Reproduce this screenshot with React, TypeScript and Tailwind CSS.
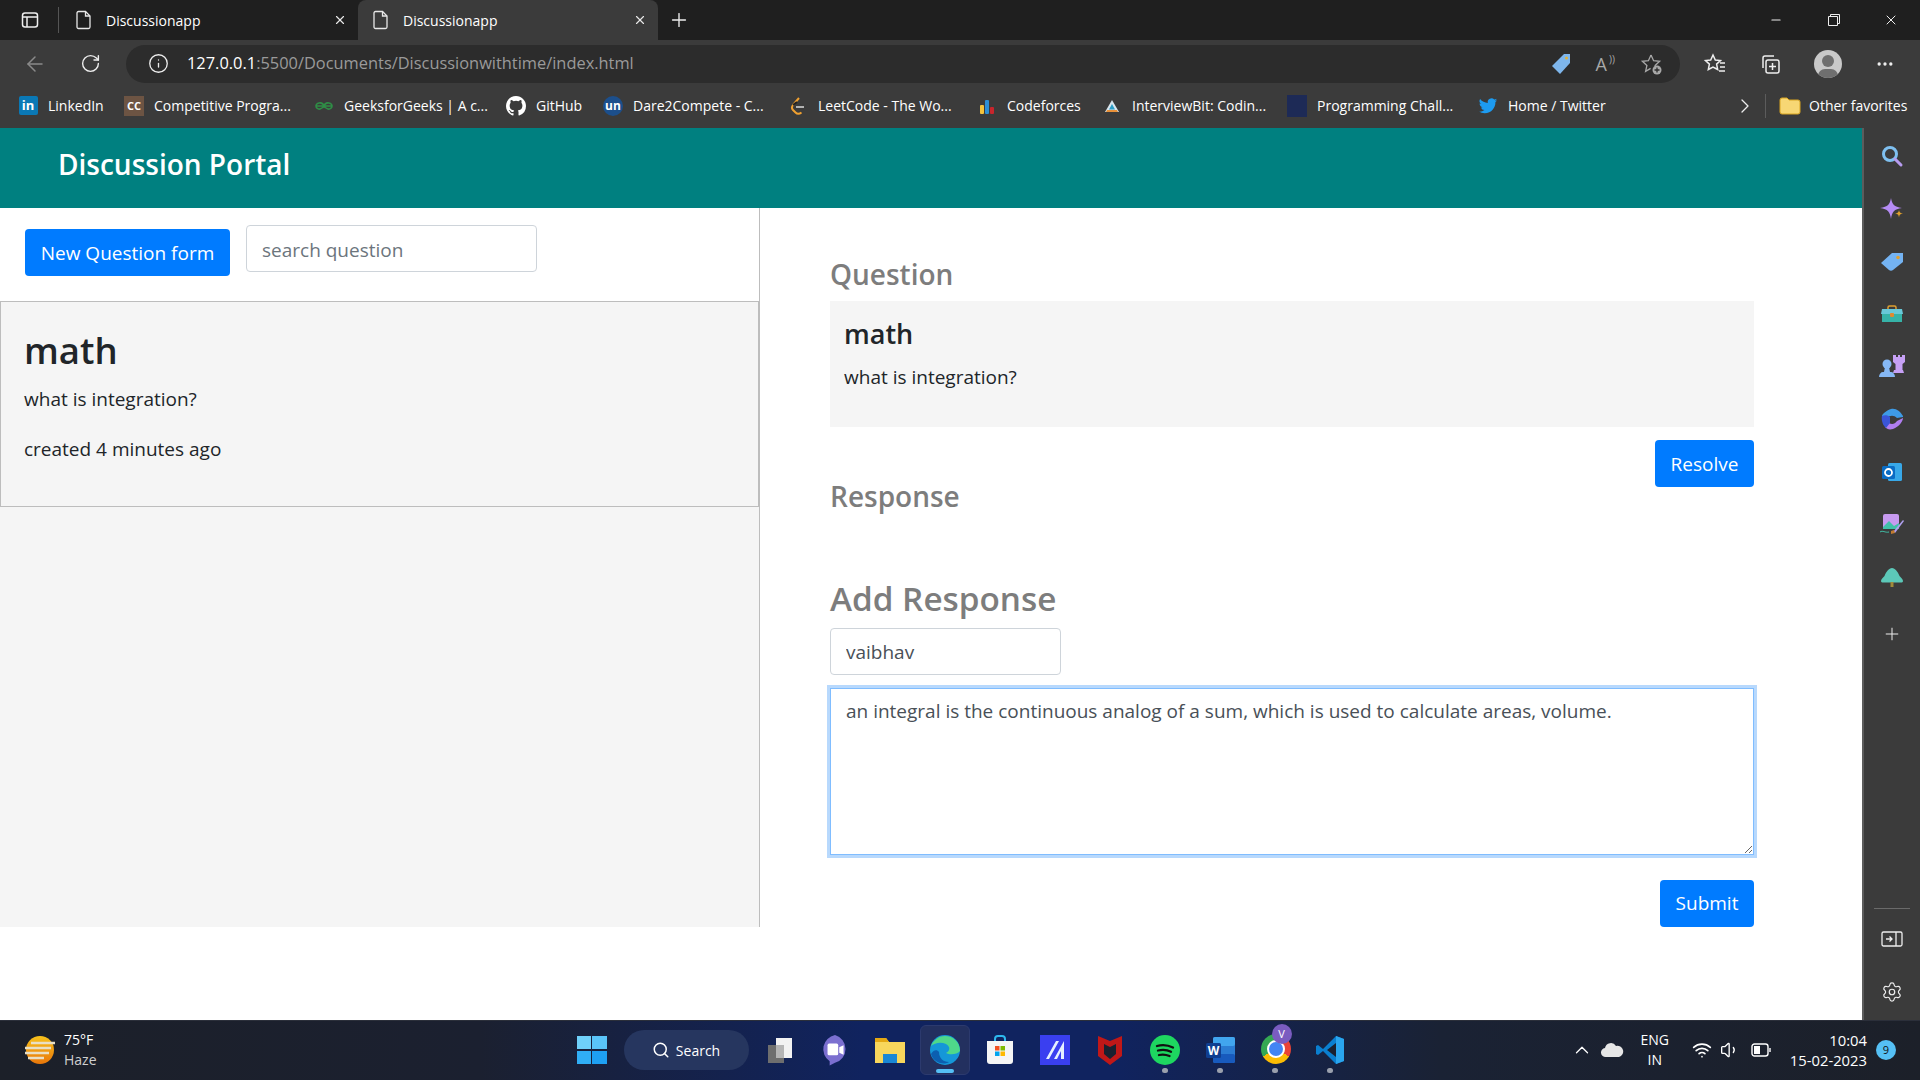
import { ReactNode } from "react";
import {
  ArrowLeft,
  ChevronRight,
  ChevronUp,
  Info,
  Minus,
  MoreHorizontal,
  Plus,
  RotateCw,
  Search,
  Settings,
  Volume1,
  Wifi,
  X,
} from "lucide-react";

function FileIcon() {
  return (
    <svg width="18" height="20" viewBox="0 0 18 20" fill="none" stroke="#e8e8e8" strokeWidth="1.3">
      <path d="M3.5 1.5h7l4.5 4.5v11a1.5 1.5 0 0 1-1.5 1.5h-10A1.500 1.500 0 0 1 2 17V3a1.500 1.500 0 0 1 1.500-1.500z" />
      <path d="M10.5 1.5V6H15" />
    </svg>
  );
}

function Tab({ active }: { active?: boolean }) {
  return (
    <div
      className={`flex h-10 items-center pl-[14px] pr-[11px] ${
        active ? "w-[300px] rounded-t-lg bg-[#3b3b3b]" : "w-[299px] pl-[16px]"
      }`}
    >
      <FileIcon />
      <span className="ml-[13px] flex-1 text-[14px] text-white">Discussionapp</span>
      <X size={14} color="#e8e8e8" />
    </div>
  );
}

const bookmarks: { label: string; icon: ReactNode; width: string }[] = [
  {
    label: "LinkedIn",
    width: "w-[76px]",
    icon: (
      <div className="flex h-[19px] w-[19px] items-center justify-center rounded-[2px] bg-[#0a78b5] text-[13px] font-bold leading-none text-white">
        in
      </div>
    ),
  },
  {
    label: "Competitive Progra...",
    width: "w-[160px]",
    icon: (
      <div className="flex h-[20px] w-[20px] items-center justify-center bg-[#6d5443] text-[11px] font-bold leading-none text-white">
        CC
      </div>
    ),
  },
  {
    label: "GeeksforGeeks | A c...",
    width: "w-[162px]",
    icon: (
      <svg width="20" height="20" viewBox="0 0 20 20" fill="none" stroke="#2f8d46" strokeWidth="1.6">
        <path d="M10 10h8M10 10H2M10 10c-1-3-3-3.500-5-3S2 9 2 10c0 2 2 3.500 4 3s3-1 4-3c1 2 2 2.500 4 3s4-1 4-3c0-1-1-2.500-3-3s-4 0-5 3z" />
      </svg>
    ),
  },
  {
    label: "GitHub",
    width: "w-[67px]",
    icon: (
      <svg width="20" height="20" viewBox="0 0 16 16" fill="#ffffff">
        <path d="M8 0C3.580 0 0 3.580 0 8c0 3.540 2.290 6.530 5.470 7.590.4.070.55-.17.55-.38 0-.19-.01-.82-.01-1.490-2.010.370-2.530-.490-2.690-.940-.09-.23-.48-.94-.82-1.130-.28-.15-.68-.52-.01-.53.630-.01 1.080.580 1.230.820.720 1.210 1.870.870 2.330.660.070-.520.280-.870.510-1.070-1.780-.200-3.640-.890-3.640-3.950 0-.870.310-1.590.820-2.150-.080-.200-.360-1.020.080-2.120 0 0 .670-.210 2.200.820a7.500 7.500 0 0 1 4 0c1.530-1.040 2.200-.820 2.200-.820.440 1.100.160 1.920.080 2.120.510.560.820 1.270.820 2.150 0 3.070-1.870 3.750-3.650 3.950.290.250.540.730.540 1.480 0 1.070-.010 1.930-.010 2.200 0 .210.150.460.550.380A8.010 8.010 0 0 0 16 8c0-4.420-3.580-8-8-8z" />
      </svg>
    ),
  },
  {
    label: "Dare2Compete - C...",
    width: "w-[155px]",
    icon: (
      <div className="flex h-[20px] w-[20px] items-center justify-center rounded-full bg-[#1c4f8c] text-[12px] font-bold leading-none text-white">
        un
      </div>
    ),
  },
  {
    label: "LeetCode - The Wo...",
    width: "w-[159px]",
    icon: (
      <svg width="20" height="20" viewBox="0 0 20 20" fill="none" strokeWidth="2">
        <path d="M11 2 5 9c-1.500 2-1 4 0 5l2.500 2.500c1.500 1.500 4 1.500 6 0" stroke="#f0a030" />
        <path d="M8 11h8" stroke="#b3b3b3" />
        <path d="M9 6l-4 3" stroke="#222222" />
      </svg>
    ),
  },
  {
    label: "Codeforces",
    width: "w-[95px]",
    icon: (
      <svg width="20" height="20" viewBox="0 0 20 20">
        <rect x="3" y="9" width="4" height="9" rx="1" fill="#f5c33b" />
        <rect x="8" y="4" width="4" height="14" rx="1" fill="#2d8fd5" />
        <rect x="13" y="11" width="4" height="7" rx="1" fill="#c8252c" />
      </svg>
    ),
  },
  {
    label: "InterviewBit: Codin...",
    width: "w-[155px]",
    icon: (
      <svg width="20" height="20" viewBox="0 0 20 20">
        <path d="M10 4 17 16H3z" fill="#d9e6ef" />
        <path d="M10 8l3 5.500H7z" fill="#2c9fc9" />
        <path d="M4 16h12l-1-2H5z" fill="#e8913a" />
      </svg>
    ),
  },
  {
    label: "Programming Chall...",
    width: "w-[161px]",
    icon: <div className="h-[22px] w-[20px] bg-[#1d2a56]" />,
  },
  {
    label: "Home / Twitter",
    width: "w-[120px]",
    icon: (
      <svg width="20" height="20" viewBox="0 0 24 24" fill="#1d9bf0">
        <path d="M23 5a9 9 0 0 1-2.600.700 4.500 4.500 0 0 0 2-2.500 9 9 0 0 1-2.900 1.100 4.500 4.500 0 0 0-7.700 4.100A12.800 12.800 0 0 1 2.500 3.700a4.500 4.500 0 0 0 1.400 6 4.500 4.500 0 0 1-2-.6c0 2.200 1.500 4.100 3.600 4.500a4.500 4.500 0 0 1-2 .1 4.500 4.500 0 0 0 4.200 3.100A9 9 0 0 1 1 18.700 12.800 12.800 0 0 0 8 20.700c8.300 0 12.900-6.900 12.900-12.900v-.6A9 9 0 0 0 23 5z" />
      </svg>
    ),
  },
];

function Bookmark({ label, icon, width }: { label: string; icon: ReactNode; width: string }) {
  return (
    <div className="flex items-center gap-[10px]">
      <div className="flex w-[20px] justify-center">{icon}</div>
      <span className={`${width} whitespace-nowrap text-[14px] text-white`}>{label}</span>
    </div>
  );
}

function BrowserChrome() {
  return (
    <div>
      <div className="flex h-10 items-center bg-[#1f1f1f]">
        <div className="flex w-[59px] items-center justify-center border-r border-[#555555] py-1 pl-[2px]">
          <svg width="18" height="18" viewBox="0 0 18 18" fill="none" stroke="#eeeeee" strokeWidth="1.5">
            <rect x="1.500" y="2" width="15" height="14" rx="2.500" />
            <path d="M1.500 6h15M6 6v10" />
          </svg>
        </div>
        <div className="w-[299px]">
          <Tab />
        </div>
        <Tab active />
        <Plus size={22} color="#eeeeee" strokeWidth={1.5} className="ml-[10px]" />
        <div className="ml-auto flex items-center gap-[42px] pr-[21px]">
          <Minus size={14} color="#eeeeee" className="mr-[2px]" />
          <svg width="14" height="14" viewBox="0 0 14 14" fill="none" stroke="#eeeeee">
            <path d="M1.500 3.500h9v9h-9zM3.500 3.500v-2h9v9h-2" />
          </svg>
          <X size={16} color="#eeeeee" strokeWidth={1.5} />
        </div>
      </div>
      <div className="flex h-[45px] items-center bg-[#3b3b3b] pt-[2px]">
        <ArrowLeft size={24} color="#8a8a8a" strokeWidth={1.5} className="ml-[23px]" />
        <RotateCw size={21} color="#eeeeee" strokeWidth={1.6} className="ml-[33px]" />
        <div className="ml-[25px] flex h-[38px] w-[1554px] items-center rounded-full bg-[#2c2c2c]">
          <Info size={21} color="#eeeeee" strokeWidth={1.5} className="ml-[22px]" />
          <span className="ml-[18px] text-[16.400px]">
            <span className="text-white">127.0.0.1</span>
            <span className="text-[#9a9a9a]">:5500/Documents/Discussionwithtime/index.html</span>
          </span>
          <svg width="24" height="24" viewBox="0 0 24 24" className="ml-auto">
            <path d="M15 2h6v9L11 22 3 14z" fill="#7eb6ec" />
            <circle cx="17.500" cy="6" r="1.500" fill="#e0b23a" />
          </svg>
          <span className="relative ml-[23px] text-[18px] leading-none text-[#a8a8a8]">
            A<span className="absolute -right-2 -top-[1px] text-[10px]">))</span>
          </span>
          <svg width="24" height="24" viewBox="0 0 24 24" fill="none" stroke="#a8a8a8" strokeWidth="1.300" className="ml-[33px] mr-[16px]">
            <path d="M11 3l2.600 5.700 6 .6-4.500 4.100 1 4M11 3 8.400 8.700l-6 .6 4.500 4.100-1.300 6 5-3" />
            <circle cx="17" cy="18" r="4.500" fill="#a8a8a8" stroke="none" />
            <path d="M17 15.500v5M14.500 18h5" stroke="#2c2c2c" />
          </svg>
        </div>
        <svg width="24" height="24" viewBox="0 0 24 24" fill="none" stroke="#eeeeee" strokeWidth="1.500" className="ml-[23px]">
          <path d="M10 3l2.300 5 5.200.5-3.900 3.600 1.100 5.400L10 15l-4.700 2.500 1.100-5.400L2.500 8.500 7.700 8zM17 11h5M17 15h5M16 19h6" />
        </svg>
        <svg width="24" height="24" viewBox="0 0 24 24" fill="none" stroke="#eeeeee" strokeWidth="1.500" className="ml-[31px]">
          <rect x="8" y="8" width="13" height="13" rx="2" />
          <path d="M14.500 11v7M11 14.500h7M5 16V6a2 2 0 0 1 2-2h9" />
        </svg>
        <div className="relative ml-[32px] h-[28px] w-[28px] overflow-hidden rounded-full bg-[#c9c9c9]">
          <div className="absolute left-[8px] top-[5px] h-[12px] w-[12px] rounded-full bg-[#6f6f6f]" />
          <div className="absolute left-[4px] top-[19px] h-[14px] w-[20px] rounded-full bg-[#6f6f6f]" />
        </div>
        <MoreHorizontal size={20} color="#eeeeee" className="ml-[33px]" />
      </div>
      <div className="flex h-[43px] items-center bg-[#3b3b3b] pb-[2px] pl-[18px]">
        {bookmarks.map((b) => (
          <Bookmark key={b.label} {...b} />
        ))}
        <ChevronRight size={24} color="#eeeeee" strokeWidth={1.3} className="ml-[105px]" />
        <div className="ml-[8px] mr-[13px] h-[24px] w-px bg-[#5c5c5c]" />
        <svg width="22" height="20" viewBox="0 0 22 20">
          <path d="M1 4a2 2 0 0 1 2-2h5l2 2h9a2 2 0 0 1 2 2v10a2 2 0 0 1-2 2H3a2 2 0 0 1-2-2z" fill="#f7d774" stroke="#d9a520" />
        </svg>
        <span className="ml-[8px] whitespace-nowrap text-[14px] text-white">Other favorites</span>
      </div>
    </div>
  );
}

const sideIcons: ReactNode[] = [
  <svg key="s" width="24" height="24" viewBox="0 0 24 24" fill="none">
    <circle cx="10" cy="10" r="6.500" stroke="#7fc0f0" strokeWidth="3" />
    <path d="M15 15l6 6" stroke="#b79cf0" strokeWidth="3" strokeLinecap="round" />
  </svg>,
  <svg key="sp" width="24" height="24" viewBox="0 0 24 24">
    <path d="M11 1c1 6 3 9 11 10-8 1-10 4-11 11-1-7-3-10-11-11 8-1 10-4 11-10z" fill="#b58cf5" />
    <path d="M19 13c.4 2.500 1.200 3.200 4 3.600-2.800.4-3.600 1.100-4 3.900-.4-2.800-1.200-3.500-4-3.900 2.800-.4 3.600-1.100 4-3.600z" fill="#dfa02e" />
  </svg>,
  <svg key="t" width="24" height="24" viewBox="0 0 24 24">
    <path d="M1 14 12 4h11v9L13 21c-1 1-3 1-4 0z" fill="#74b3f2" />
    <circle cx="18" cy="8.500" r="1.800" fill="#e0a030" />
  </svg>,
  <svg key="b" width="24" height="24" viewBox="0 0 24 24">
    <rect x="8" y="4" width="8" height="6" rx="1.500" fill="none" stroke="#e0a030" strokeWidth="1.500" />
    <path d="M2 7h20l1 5H1z" fill="#68c8d8" />
    <rect x="2" y="12" width="20" height="8" fill="#36b3a8" />
    <rect x="10" y="11" width="4" height="4" rx="1" fill="#e08a30" />
  </svg>,
  <svg key="c" width="26" height="24" viewBox="0 0 26 24">
    <circle cx="8" cy="10" r="4.500" fill="#86b8f5" />
    <path d="M6 13h4l1 5H5zM0 23c0-3 2-5 4-5h8c2 0 4 2 4 5z" fill="#86b8f5" />
    <path d="M14 1h3v2h2V1h2v2h2V1h3v7l-2.500 2v6H24l1 3H14l1-3h1.500v-6L14 8z" fill="#c6a0f5" />
  </svg>,
  <svg key="o" width="24" height="24" viewBox="0 0 24 24">
    <path d="M2 9c0-2 5-6 9-7 5-1 9 2 12 7v1l-6 1c-3-3-7-3-10 0l-5 1z" fill="#3e9be6" />
    <path d="M23 11c0 3-4 9-10 11-4 1-6 0-8-2l4-4c3 2 6 1 8-2z" fill="#b07ef0" />
    <path d="M2 9c2-1 6-1 8 1v6l-4 5C3 19 1 13 2 9z" fill="#3a55d8" />
  </svg>,
  <svg key="ol" width="24" height="24" viewBox="0 0 24 24">
    <rect x="8" y="3" width="14" height="18" rx="1.500" fill="#38a8e8" />
    <rect x="2" y="6" width="13" height="13" rx="1.500" fill="#0a6cc4" />
    <circle cx="8.500" cy="12.500" r="3.500" fill="none" stroke="#ffffff" strokeWidth="1.800" />
  </svg>,
  <svg key="d" width="26" height="24" viewBox="0 0 26 24">
    <rect x="4" y="2" width="16" height="15" rx="2" fill="#c79af0" />
    <path d="M4 15l6-6 5 5 5-3v6H4z" fill="#40c0a8" />
    <path d="M14 20 24 8l1 1-9 12z" fill="#b0a0f0" />
    <path d="M12 19l3-1 1 3-4 1z" fill="#c07a30" />
    <path d="M1 20c3-2 5 1 9 0" stroke="#40c0a8" fill="none" />
  </svg>,
  <svg key="tree" width="24" height="24" viewBox="0 0 24 24">
    <path d="M1 16c0-2 2-3 3.500-5C6 7 9 3 12 3s6 4 7.500 8c1.500 2 3.500 3 3.500 5 0 1-1 1.500-2 1.500H3c-1 0-2-.5-2-1.500z" fill="#5cc8b8" />
    <rect x="10.500" y="17" width="3" height="5" fill="#a08a3a" />
  </svg>,
];

function Sidebar() {
  return (
    <div className="flex w-[58px] flex-col items-center border-l-2 border-[#5c5c5c] bg-[#3b3b3b] pt-[16px]">
      <div className="flex flex-col items-center gap-[28.600px]">
        {sideIcons}
        <Plus size={20} color="#eeeeee" strokeWidth={1.2} className="mt-[7px]" />
      </div>
      <div className="mt-auto mb-[17px] flex flex-col items-center">
        <div className="mb-[21px] h-px w-[36px] bg-[#6a6a6a]" />
        <svg width="22" height="18" viewBox="0 0 22 18" fill="none" stroke="#eeeeee" strokeWidth="1.300">
          <rect x="1" y="2" width="20" height="14" rx="1.500" />
          <path d="M15 2v14M5 9h6M8.500 6.500 11 9l-2.500 2.500" />
        </svg>
        <Settings size={22} color="#eeeeee" strokeWidth={1.3} className="mt-[33px]" />
      </div>
    </div>
  );
}

function QuestionList() {
  return (
    <div className="flex w-[760px] flex-col border-r border-[#bdbdbd] bg-[#f5f5f5]">
      <div className="flex h-[93px] items-start bg-white">
        <button className="ml-[25px] mt-[21px] h-[47px] w-[205px] rounded bg-[#007bff] pt-[2px] text-[19px] text-white">
          New Question form
        </button>
        <input
          readOnly
          placeholder="search question"
          className="ml-[16px] mt-[17px] h-[47px] w-[291px] rounded border border-[#ced4da] bg-white px-[15px] pt-[3px] text-[19px] placeholder:text-[#6c757d]"
        />
      </div>
      <div className="h-[206px] border border-[#bdbdbd] bg-[#f5f5f5] pl-[23px] pt-[25px] text-[#212529]">
        <h2 className="text-[36.500px] font-semibold leading-[46px]">math</h2>
        <p className="mt-[11px] text-[19px] leading-[30px]">what is integration?</p>
        <p className="mt-[20px] text-[19px] leading-[30px]">created 4 minutes ago</p>
      </div>
    </div>
  );
}

function DetailsPanel() {
  return (
    <div className="flex flex-1 flex-col bg-white pl-[70px] pr-[108px] pt-[48px]">
      <h3 className="text-[28px] font-semibold leading-[36px] text-[#7d7d7d]">Question</h3>
      <div className="mt-[9px] h-[126px] bg-[#f5f5f5] pl-[14px] pt-[15px] text-[#212529]">
        <h4 className="text-[27px] font-semibold leading-[36px]">math</h4>
        <p className="mt-[10px] text-[19px] leading-[30px]">what is integration?</p>
      </div>
      <div className="mt-[13px] flex justify-end">
        <button className="h-[47px] w-[99px] rounded bg-[#007bff] pt-[1px] text-[19px] text-white">Resolve</button>
      </div>
      <h3 className="-mt-[9px] text-[28px] font-semibold leading-[36px] text-[#7d7d7d]">Response</h3>
      <h2 className="mt-[62px] text-[33.300px] font-semibold leading-[44px] text-[#7d7d7d]">Add Response</h2>
      <input
        readOnly
        value="vaibhav"
        className="mt-[8px] h-[47px] w-[231px] rounded border border-[#ced4da] px-[15px] pt-[1px] text-[19px] text-[#495057] outline-none"
      />
      <textarea
        readOnly
        value="an integral is the continuous analog of a sum, which is used to calculate areas, volume."
        className="mt-[13px] h-[167px] w-full border border-[#80bdff] px-[15px] pb-[6px] pt-[7px] text-[19px] leading-[30px] text-[#495057] outline-none ring-[3px] ring-[#b8d9fd]"
      />
      <div className="mt-[25px] flex justify-end">
        <button className="h-[47px] w-[94px] rounded bg-[#007bff] text-[19px] text-white">Submit</button>
      </div>
    </div>
  );
}

function TaskApp({ children, dot, active }: { children: ReactNode; dot?: boolean; active?: boolean }) {
  return (
    <div
      className={`relative flex h-[50px] w-[50px] items-center justify-center rounded-md ${
        active ? "border border-[#2c3a6e] bg-[#23305f]" : ""
      }`}
    >
      {children}
      {dot && <div className="absolute bottom-[2px] h-[5px] w-[6px] rounded-full bg-[#9aa0ad]" />}
      {active && <div className="absolute bottom-[1px] h-[4px] w-[18px] rounded-full bg-[#55c0f5]" />}
    </div>
  );
}

function Taskbar() {
  return (
    <div className="flex h-[60px] items-center border-t border-[#2b2f3a] bg-[linear-gradient(90deg,#1c2029_0%,#1b2030_25%,#10235f_45%,#10235f_58%,#1a2234_75%,#1c2029_100%)] pb-[1px] text-white">
      <svg width="34" height="34" viewBox="0 0 34 34" className="ml-[23px]">
        <defs>
          <linearGradient id="sun" x1="0" y1="0" x2="0" y2="1">
            <stop offset="0%" stopColor="#f8c21c" />
            <stop offset="100%" stopColor="#e8760a" />
          </linearGradient>
        </defs>
        <circle cx="17" cy="17" r="14" fill="url(#sun)" />
        <path d="M8 10h24M2 15h26M2 20h24M5 25h16" stroke="#e9dfc4" strokeWidth="2.500" />
      </svg>
      <div className="ml-[7px] text-[14px] leading-[20px]">
        <div>75°F</div>
        <div className="text-[#cfcfcf]">Haze</div>
      </div>
      <div className="ml-[480px] flex items-center">
        <div className="grid h-[28px] w-[30px] grid-cols-2 gap-[1.500px]">
          <div className="bg-[#6fd0fa]" />
          <div className="bg-[#5ac4f8]" />
          <div className="bg-[#30aef5]" />
          <div className="bg-[#1ea0f3]" />
        </div>
        <div className="ml-[17px] flex h-[40px] w-[125px] items-center justify-center gap-[6px] rounded-full bg-[#26365f] text-[14px]">
          <Search size={18} strokeWidth={2} />
          Search
        </div>
        <div className="ml-[6px] flex items-center gap-[5px]">
          <TaskApp>
            <svg width="30" height="30" viewBox="0 0 30 30">
              <rect x="3" y="10" width="16" height="18" fill="#6e6e6e" />
              <rect x="11" y="3" width="16" height="20" fill="#f2f2f2" />
              <rect x="11" y="10" width="8" height="13" fill="#b5b5b5" />
            </svg>
          </TaskApp>
          <TaskApp>
            <svg width="32" height="32" viewBox="0 0 30 30">
              <path d="M15 1a13.500 13.500 0 0 1 0 26l-5 2.500v-4A13.500 13.500 0 0 1 15 1z" fill="#7b6fd0" />
              <rect x="8" y="9" width="10" height="11" rx="1.500" fill="#ffffff" />
              <path d="M19 12.500l4-2v9l-4-2z" fill="#ffffff" />
            </svg>
          </TaskApp>
          <TaskApp>
            <svg width="32" height="30" viewBox="0 0 32 30">
              <path d="M1 3h11l3 4h16v21H1z" fill="#f8d65c" />
              <path d="M1 3h11l3 4H1z" fill="#e5a812" />
              <rect x="9" y="19" width="14" height="9" fill="#1a87d6" />
            </svg>
          </TaskApp>
          <TaskApp active>
            <svg width="32" height="32" viewBox="0 0 32 32">
              <circle cx="16" cy="16" r="15" fill="#1597d8" />
              <path d="M31 17c0-9-7-15-15-15C9 2 4 7 2 12c4-4 15-5 18 1 1 3-1 5-3 6 3 2 11 2 14-2z" fill="#4fd88a" />
              <path d="M10 18c0 6 4 10 10 10-4 3-15 2-18-8 2-4 6-5 8-2z" fill="#0c5fb0" />
            </svg>
          </TaskApp>
          <TaskApp>
            <svg width="30" height="32" viewBox="0 0 30 32">
              <path d="M10 7V5a3 3 0 0 1 3-3h4a3 3 0 0 1 3 3v2" stroke="#2db8ee" strokeWidth="2" fill="none" />
              <path d="M2 7h26v20a3 3 0 0 1-3 3H5a3 3 0 0 1-3-3z" fill="#f5f5f5" />
              <rect x="10" y="12" width="4.500" height="4.500" fill="#f25022" />
              <rect x="15.500" y="12" width="4.500" height="4.500" fill="#7fba00" />
              <rect x="10" y="17.500" width="4.500" height="4.500" fill="#00a4ef" />
              <rect x="15.500" y="17.500" width="4.500" height="4.500" fill="#ffb900" />
            </svg>
          </TaskApp>
          <TaskApp>
            <svg width="30" height="30" viewBox="0 0 30 30">
              <rect width="30" height="30" fill="#3a3ff0" />
              <path d="M6 24 16 6h3L9 24zM14 24 24 6v18h-3v-8l-4 8z" fill="#e6f0ff" />
            </svg>
          </TaskApp>
          <TaskApp>
            <svg width="28" height="32" viewBox="0 0 28 32">
              <path d="M2 2l12 5 12-5v20l-12 9-12-9z" fill="#c01818" />
              <path d="M8 10l6 3 6-3v10l-6 5-6-5z" fill="#1a2130" />
            </svg>
          </TaskApp>
          <TaskApp dot>
            <svg width="30" height="30" viewBox="0 0 30 30" fill="none">
              <circle cx="15" cy="15" r="15" fill="#1ed760" />
              <path d="M7 11c5-1.500 11-1 16 1.500M8 15.500c4-1 9-.8 13 1.300M9 20c3.500-.8 7-.5 10.500 1" stroke="#111111" strokeWidth="2.300" strokeLinecap="round" />
            </svg>
          </TaskApp>
          <TaskApp dot>
            <svg width="30" height="30" viewBox="0 0 30 30">
              <rect x="8" y="2" width="22" height="26" rx="2" fill="#2b7cd3" />
              <rect x="8" y="2" width="22" height="9" rx="2" fill="#41a5ee" />
              <rect x="8" y="19" width="22" height="9" rx="2" fill="#185abd" />
              <rect x="1" y="8" width="15" height="15" rx="1.500" fill="#103f91" />
              <text x="8.500" y="19.500" fontSize="12" fontWeight="700" fill="#ffffff" textAnchor="middle">W</text>
            </svg>
          </TaskApp>
          <TaskApp dot>
            <div className="relative h-[32px] w-[32px] pl-[2px]">
              <div className="h-[30px] w-[30px] rounded-full bg-[conic-gradient(#ea4335_0deg_120deg,#fbbc04_120deg_240deg,#34a853_240deg_360deg)] p-[8px]">
                <div className="h-full w-full rounded-full bg-[#4285f4] ring-2 ring-white" />
              </div>
              <div className="absolute -right-[1px] -top-[10px] flex h-[20px] w-[20px] items-center justify-center rounded-full bg-[#7a5cc0] text-[11px]">
                V
              </div>
            </div>
          </TaskApp>
          <TaskApp dot>
            <svg width="30" height="30" viewBox="0 0 30 30">
              <path d="M21 1 8 14 3 10 1 11v8l2 1 5-4 13 13 8-3V4z" fill="#0a7fd0" />
              <path d="M21 8v14l-9-7z" fill="#1a2130" />
              <path d="M21 1l8 3v22l-8 3z" fill="#2aa5ee" />
            </svg>
          </TaskApp>
        </div>
      </div>
      <div className="ml-auto flex items-center pr-[24px]">
        <ChevronUp size={22} strokeWidth={1.4} />
        <svg width="24" height="16" viewBox="0 0 24 16" className="ml-[7px]">
          <path d="M6 15a4.500 4.500 0 0 1-1-9 6 6 0 0 1 11-2 5 5 0 0 1 3 11z" fill="#e6e6e6" />
        </svg>
        <div className="ml-[13px] w-[36px] text-center text-[14px] leading-[20px]">
          <div>ENG</div>
          <div>IN</div>
        </div>
        <Wifi size={20} strokeWidth={2} className="ml-[19px]" />
        <Volume1 size={20} strokeWidth={1.6} className="ml-[8px]" />
        <svg width="20" height="14" viewBox="0 0 20 14" fill="none" stroke="#ffffff" strokeWidth="1.400" className="ml-[11px]">
          <rect x="1" y="1" width="16" height="12" rx="2.500" />
          <rect x="3" y="3" width="6" height="8" fill="#ffffff" stroke="none" />
          <path d="M19 5v4" />
        </svg>
        <div className="ml-[19px] text-right text-[14.800px] leading-[20px]">
          <div>10:04</div>
          <div>15-02-2023</div>
        </div>
        <div className="ml-[9px] flex h-[20px] w-[20px] items-center justify-center rounded-full bg-[#55c0f5] text-[11px] text-[#111111]">
          9
        </div>
      </div>
    </div>
  );
}

export default function App() {
  return (
    <div className="flex h-screen w-full flex-col overflow-hidden bg-white font-['Open_Sans',sans-serif]">
      <BrowserChrome />
      <div className="flex min-h-0 flex-1">
        <div className="flex min-w-0 flex-1 flex-col">
          <div className="flex h-[80px] items-start bg-[#008080] pl-[58px] pt-[18px]">
            <h1 className="text-[28px] font-semibold leading-[36px] text-white">Discussion Portal</h1>
          </div>
          <div className="flex h-[719px]">
            <QuestionList />
            <DetailsPanel />
          </div>
        </div>
        <Sidebar />
      </div>
      <Taskbar />
    </div>
  );
}
